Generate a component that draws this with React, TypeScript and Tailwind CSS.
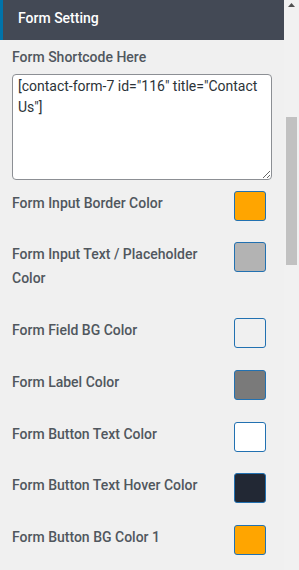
const rows = [
  { label: 'Form Input Border Color', color: '#ffa500', h: 'h-[51px]' },
  { label: 'Form Input Text / Placeholder Color', color: '#b3b3b3', h: 'h-[76px]' },
  { label: 'Form Field BG Color', color: '#f0f0f0', h: 'h-[52px]' },
  { label: 'Form Label Color', color: '#7a7a7a', h: 'h-[52px]' },
  { label: 'Form Button Text Color', color: '#ffffff', h: 'h-[51px]' },
  { label: 'Form Button Text Hover Color', color: '#222834', h: 'h-[52px]' },
  { label: 'Form Button BG Color 1', color: '#ffa500', h: 'h-[52px]' },
];

export default function App() {
  return (
    <div className="flex h-[570px] w-[299px] overflow-hidden bg-[#f0f0f0] font-['Roboto',sans-serif]">
      <div className="w-[284px] shrink-0">
        <div className="flex h-[40px] items-start border-l-[3px] border-[#0073aa] bg-[#434955] pl-[15px] pt-[8px]">
          <span className="text-[14px] leading-[20px] font-medium text-white">Form Setting</span>
        </div>
        <div className="pl-[12px] pr-[12px]">
          <p className="mt-[7px] text-[14px] leading-[20px] font-medium text-[#50575e]">Form Shortcode Here</p>
          <textarea
            readOnly
            className="mt-[7px] block h-[106px] w-[260px] resize-y rounded-[4px] border border-[#8c8f94] bg-white px-[5px] pt-[1px] text-[14px] leading-[21px] text-[#2c3338] outline-none"
            defaultValue={'[contact-form-7 id="116" title="Contact Us"]'}
          />
          <div className="mt-[11px]">
            {rows.map((r) => (
              <div key={r.label} className={`flex items-start justify-between ${r.h}`}>
                <span className="w-[200px] text-[14px] leading-[24px] font-medium text-[#50575e]">{r.label}</span>
                <span
                  className="mr-[6px] h-[30px] w-[32px] rounded-[3px] border border-[#2271b1]"
                  style={{ backgroundColor: r.color }}
                />
              </div>
            ))}
          </div>
        </div>
      </div>
      <div className="flex w-[15px] flex-col items-center bg-[#f1f1f1]">
        <svg width="7" height="4" viewBox="0 0 7 4" className="mt-[3px]">
          <polygon points="3.5,0 7,4 0,4" fill="#505050" />
        </svg>
        <div className="mt-[110px] h-[148px] w-[11px] bg-[#c1c1c1]" />
      </div>
    </div>
  );
}
